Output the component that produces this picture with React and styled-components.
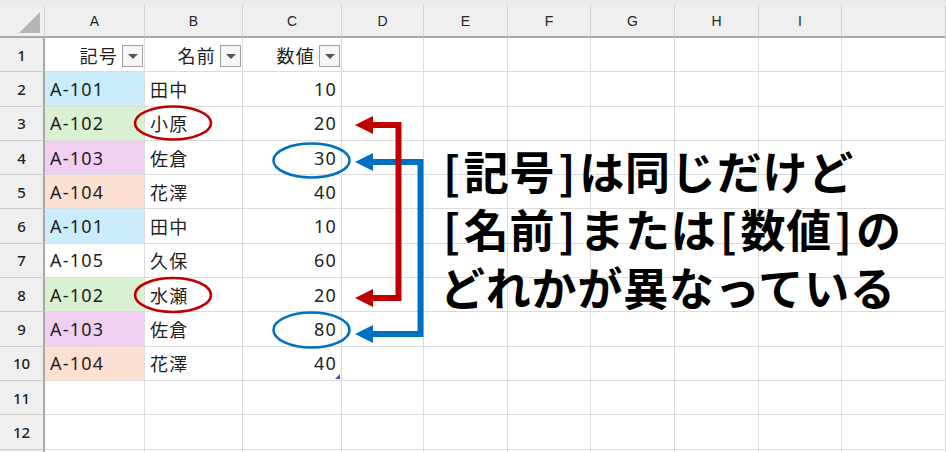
import React from 'react'
import styled, { createGlobalStyle, css } from 'styled-components'

const GlobalStyle = createGlobalStyle`
  html, body {
    margin: 0;
    padding: 0;
    background: #ffffff;
    overflow: hidden;
  }
  * { box-sizing: border-box; }
`

const COLUMNS = ['A', 'B', 'C', 'D', 'E', 'F', 'G', 'H', 'I', '']

const FILLS = {
  blue: '#caedfb',
  green: '#d9f0d3',
  pink: '#f0cff0',
  peach: '#fce1d3',
}

const rows = [
  { code: 'A-101', name: '田中', value: 10, fill: 'blue' },
  { code: 'A-102', name: '小原', value: 20, fill: 'green' },
  { code: 'A-103', name: '佐倉', value: 30, fill: 'pink' },
  { code: 'A-104', name: '花澤', value: 40, fill: 'peach' },
  { code: 'A-101', name: '田中', value: 10, fill: 'blue' },
  { code: 'A-105', name: '久保', value: 60 },
  { code: 'A-102', name: '水瀬', value: 20, fill: 'green' },
  { code: 'A-103', name: '佐倉', value: 80, fill: 'pink' },
  { code: 'A-104', name: '花澤', value: 40, fill: 'peach' },
]

const headers = ['記号', '名前', '数値']

export default function App() {
  return (
    <>
      <GlobalStyle />
      <Window>
        <TopStrip />
        <Sheet>
          <Corner />
          {COLUMNS.map((c, i) => (
            <ColHeader key={'h' + i}>{c}</ColHeader>
          ))}

          <RowHeader>1</RowHeader>
          {headers.map((h) => (
            <Cell key={h} $align="right">
              <HeaderLabel>{h}</HeaderLabel>
              <FilterButton />
            </Cell>
          ))}
          {COLUMNS.slice(3).map((c, i) => (
            <Cell key={'e1' + i} />
          ))}

          {rows.map((r, i) => (
            <React.Fragment key={i}>
              <RowHeader>{i + 2}</RowHeader>
              <Cell $fill={r.fill && FILLS[r.fill]}>{r.code}</Cell>
              <Cell>{r.name}</Cell>
              <Cell $align="right" $handle={i === rows.length - 1}>{r.value}</Cell>
              {COLUMNS.slice(3).map((c, j) => (
                <Cell key={j} />
              ))}
            </React.Fragment>
          ))}

          {[11, 12, null].map((n, k) => (
            <React.Fragment key={k}>
              <RowHeader>{n}</RowHeader>
              {COLUMNS.map((c, j) => (
                <Cell key={j} />
              ))}
            </React.Fragment>
          ))}
        </Sheet>

        <Marks viewBox="0 0 946 452" width="946" height="452">
          <ellipse cx="173" cy="123" rx="38" ry="16.5" fill="none" stroke="#c00000" strokeWidth="2.6" />
          <ellipse cx="173" cy="295" rx="38" ry="17" fill="none" stroke="#c00000" strokeWidth="2.6" />
          <ellipse cx="311.5" cy="160.5" rx="38" ry="17" fill="none" stroke="#0070c0" strokeWidth="2.6" />
          <ellipse cx="311.5" cy="330" rx="38" ry="17.5" fill="none" stroke="#0070c0" strokeWidth="2.6" />

          <path d="M371 162 H420.5 V334 H371" fill="none" stroke="#0070c0" strokeWidth="6" strokeLinejoin="miter" />
          <polygon points="355,162 373,153 373,171" fill="#0070c0" />
          <polygon points="355,334 373,325 373,343" fill="#0070c0" />

          <path d="M371 125 H398.5 V298 H371" fill="none" stroke="#c00000" strokeWidth="6" strokeLinejoin="miter" />
          <polygon points="355,125 373,116 373,134" fill="#c00000" />
          <polygon points="355,298 373,289 373,307" fill="#c00000" />
        </Marks>

        <Callout>
          <Line><Bracket>[</Bracket>記号<Bracket>]</Bracket>は同じだけど</Line>
          <Line><Bracket>[</Bracket>名前<Bracket>]</Bracket>または<Bracket>[</Bracket>数値<Bracket>]</Bracket>の</Line>
          <Line>どれかが異なっている</Line>
        </Callout>
      </Window>
    </>
  )
}

const Window = styled.div`
  position: relative;
  width: 946px;
  height: 452px;
  overflow: hidden;
  background: #ffffff;
  font-family: "Noto Sans", "Noto Sans CJK JP", sans-serif;
`

const TopStrip = styled.div`
  height: 5px;
  background: #e8ebee;
`

const Sheet = styled.div`
  display: grid;
  grid-template-columns: 45px 100px 98px 99px 82px 84px 83px 84px 84px 83px 1fr;
  grid-template-rows: 33px repeat(13, 34.3px);
`

const Corner = styled.div`
  position: relative;
  background: #efefef;
  border-right: 1px solid #d4d4d4;
  border-bottom: 2px solid #a8a8a8;
  &::after {
    content: '';
    position: absolute;
    right: 4px;
    bottom: 3px;
    width: 0;
    height: 0;
    border-left: 21px solid transparent;
    border-bottom: 21px solid #b6b6b6;
  }
`

const ColHeader = styled.div`
  display: flex;
  align-items: center;
  justify-content: center;
  background: #efefef;
  border-right: 1px solid #d2d2d2;
  border-bottom: 2px solid #a8a8a8;
  color: #262626;
  font-family: "Liberation Sans", sans-serif;
  font-size: 14px;
  padding-top: 1px;
`

const RowHeader = styled.div`
  display: flex;
  align-items: center;
  justify-content: center;
  background: #efefef;
  border-right: 2px solid #a8a8a8;
  border-bottom: 1px solid #cdcdcd;
  color: #222;
  font-family: "Noto Sans", sans-serif;
  font-size: 15px;
  font-weight: 500;
`

const Cell = styled.div`
  position: relative;
  display: flex;
  align-items: center;
  justify-content: ${(p) => (p.$align === 'right' ? 'flex-end' : 'flex-start')};
  padding: 0 4px 0 5px;
  background: ${(p) => p.$fill || '#ffffff'};
  border-right: 1px solid #dcdcdc;
  border-bottom: 1px solid #dcdcdc;
  color: #1e1e1e;
  font-size: 18px;
  letter-spacing: 1.2px;
  white-space: nowrap;
  ${(p) =>
    p.$handle &&
    css`
      &::after {
        content: '';
        position: absolute;
        right: 1px;
        bottom: 1px;
        width: 0;
        height: 0;
        border-left: 5px solid transparent;
        border-bottom: 5px solid #3f51a8;
      }
    `}
`

const HeaderLabel = styled.span`
  margin-right: 4px;
`

const FilterButton = styled.span`
  position: relative;
  flex: none;
  width: 21px;
  height: 22px;
  margin-right: -3px;
  margin-top: 2px;
  border: 1px solid #a0a0a0;
  background: #f6f6f6;
  &::after {
    content: '';
    position: absolute;
    left: 5px;
    top: 8px;
    border-left: 5px solid transparent;
    border-right: 5px solid transparent;
    border-top: 5px solid #555;
  }
`

const Marks = styled.svg`
  position: absolute;
  left: 0;
  top: 0;
  pointer-events: none;
`

const Callout = styled.div`
  position: absolute;
  left: 440px;
  top: 142px;
  display: flex;
  flex-direction: column;
  font-family: "Noto Sans CJK JP", sans-serif;
  font-weight: 700;
  font-size: 45px;
  letter-spacing: 0.8px;
  color: #000;
  white-space: nowrap;
`

const Line = styled.div`
  height: 58px;
  line-height: 58px;
`

const Bracket = styled.span`
  margin: 0 3px;
`
